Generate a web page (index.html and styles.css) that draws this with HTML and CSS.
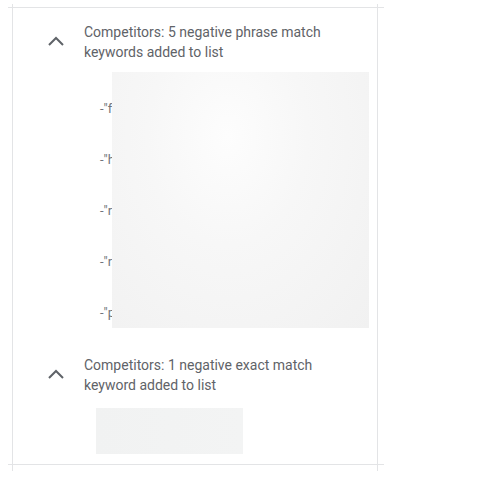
FILE: index.html
```html
<!DOCTYPE html>
<html lang="en">
<head>
    <meta charset="UTF-8">
    <meta name="viewport" content="width=device-width, initial-scale=1.0">
    <title>Negative keywords</title>
    <link rel="stylesheet" href="styles.css">
</head>
<body>
    <div class="frame">
        <div class="rule"></div>

        <!-- Phrase match group -->
        <section class="group group-phrase">
            <div class="group-head">
                <svg class="chevron" width="16" height="10" viewBox="0 0 16 10">
                    <polyline points="1,9 8,2 15,9" fill="none" stroke="#5f6368" stroke-width="2"/>
                </svg>
                <p class="group-title">Competitors: 5 negative phrase match keywords added to list</p>
            </div>
            <ul class="keywords">
                <li>-"f</li>
                <li>-"h</li>
                <li>-"r</li>
                <li>-"r</li>
                <li>-"p</li>
                <div class="redact redact-list"></div>
            </ul>
        </section>

        <!-- Exact match group -->
        <section class="group group-exact">
            <div class="group-head">
                <svg class="chevron" width="16" height="10" viewBox="0 0 16 10">
                    <polyline points="1,9 8,2 15,9" fill="none" stroke="#5f6368" stroke-width="2"/>
                </svg>
                <p class="group-title">Competitors: 1 negative exact match keyword added to list</p>
            </div>
            <div class="redact redact-single"></div>
        </section>

        <div class="rule"></div>
    </div>
</body>
</html>
```

FILE: styles.css
```css
/* Reset */
* {
    margin: 0;
    padding: 0;
    box-sizing: border-box;
}

body {
    background: #fff;
    font-family: Roboto, 'Liberation Sans', Arial, sans-serif;
    color: #5f6368;
    padding-top: 4px;
}

.frame {
    margin-left: 12px;
    width: 366px;
    border-left: 1px solid #e3e4e6;
    border-right: 1px solid #e3e4e6;
    padding: 3px 0 6px;
}

.rule {
    height: 1px;
    background: #e3e4e6;
    margin: 0 -7px 0 -5px;
}

.group-head {
    display: flex;
    align-items: center;
    padding-left: 35px;
}

.chevron {
    flex: none;
    margin: 0 20px 3px 0;
}

.group-title {
    font-size: 14px;
    line-height: 20px;
    width: 260px;
}

.group-phrase {
    padding-top: 14px;
}

.keywords {
    list-style: none;
    position: relative;
    margin-top: 21px;
    padding-left: 87px;
}

.keywords li {
    height: 51px;
    display: flex;
    align-items: center;
    font-size: 13px;
    color: #70757a;
}

.redact {
    background: #f2f2f3;
}

.redact-list {
    position: absolute;
    left: 99px;
    top: -11px;
    width: 257px;
    height: 256px;
    background: radial-gradient(ellipse at 45% 25%, #fdfdfd 0%, #f7f7f7 40%, #f1f1f1 100%);
}

.group-exact {
    padding-top: 17px;
}

.redact-single {
    margin: 13px 0 10px 83px;
    width: 147px;
    height: 46px;
    background: linear-gradient(90deg, #f1f2f2, #f3f4f4);
}
```
